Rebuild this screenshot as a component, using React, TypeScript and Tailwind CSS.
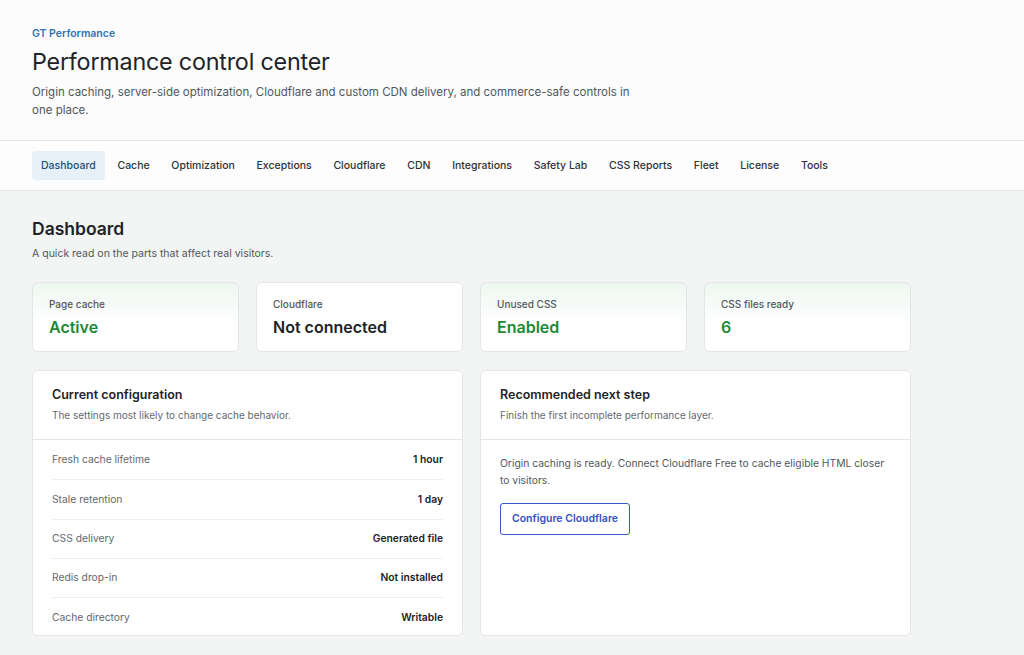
const tabs = [
  'Dashboard',
  'Cache',
  'Optimization',
  'Exceptions',
  'Cloudflare',
  'CDN',
  'Integrations',
  'Safety Lab',
  'CSS Reports',
  'Fleet',
  'License',
  'Tools',
];

const stats = [
  { label: 'Page cache', value: 'Active', ok: true },
  { label: 'Cloudflare', value: 'Not connected', ok: false },
  { label: 'Unused CSS', value: 'Enabled', ok: true },
  { label: 'CSS files ready', value: '6', ok: true },
];

const config = [
  { label: 'Fresh cache lifetime', value: '1 hour' },
  { label: 'Stale retention', value: '1 day' },
  { label: 'CSS delivery', value: 'Generated file' },
  { label: 'Redis drop-in', value: 'Not installed' },
  { label: 'Cache directory', value: 'Writable' },
];

const StatCard = ({ label, value, ok }: { label: string; value: string; ok: boolean }) => (
  <div
    className={
      ok
        ? 'h-[70px] rounded-[6px] border border-[#e3e6e8] bg-gradient-to-b from-[#eef7f0] to-white to-60% px-[16px] pt-[14px]'
        : 'h-[70px] rounded-[6px] border border-[#e3e6e8] bg-white px-[16px] pt-[14px]'
    }
  >
    <p className="text-[10px] leading-[14px] font-medium text-[#50575e]">{label}</p>
    <p
      className={
        ok
          ? 'mt-[5px] text-[16px] leading-[22px] font-semibold text-[#1d8a33]'
          : 'mt-[5px] text-[16px] leading-[22px] font-semibold text-[#1d2327]'
      }
    >
      {value}
    </p>
  </div>
);

const PanelHeader = ({ title, sub }: { title: string; sub: string }) => (
  <div className="border-b border-[#e3e6e8] px-[19px] pt-[15px] pb-[17px]">
    <h3 className="text-[12.5px] leading-[18px] font-semibold text-[#1d2327]">{title}</h3>
    <p className="mt-[4px] text-[10px] leading-[14px] text-[#646970]">{sub}</p>
  </div>
);

export default function App() {
  return (
    <div className="min-h-[655px] bg-[#f3f4f4] font-['Inter',sans-serif] text-[#1d2327]">
      <header className="border-b border-[#e4e6e8] bg-[#fcfcfc] px-8 pt-[26px] pb-[21px]">
        <p className="text-[10.5px] leading-4 font-semibold text-[#2c74b3]">GT Performance</p>
        <h1 className="mt-[4px] text-[23.3px] leading-[32px] font-normal tracking-[-0.2px] text-[#1d2327]">
          Performance control center
        </h1>
        <p className="mt-[5px] max-w-[610px] text-[11.5px] leading-[18px] text-[#50575e]">
          Origin caching, server-side optimization, Cloudflare and custom CDN delivery, and commerce-safe controls in
          one place.
        </p>
      </header>

      <nav className="flex items-center gap-[3.7px] border-b border-[#e4e6e8] bg-[#fdfdfd] px-8 py-[10px]">
        {tabs.map((t, i) => (
          <span
            key={t}
            className={
              i === 0
                ? 'flex h-[29px] items-center rounded-[4px] bg-[#e6f0f8] px-[9px] text-[10.5px] font-medium text-[#1d4f7a]'
                : 'flex h-[29px] items-center rounded-[4px] px-[9px] text-[10.5px] font-medium text-[#2c3338]'
            }
          >
            {t}
          </span>
        ))}
      </nav>

      <main className="px-8 pt-[25px] pb-[19px]">
        <h2 className="text-[17.5px] leading-[26px] font-semibold text-[#1d2327]">Dashboard</h2>
        <p className="mt-[4px] text-[10.5px] leading-4 text-[#50575e]">
          A quick read on the parts that affect real visitors.
        </p>

        <div className="mt-[20px] grid w-[879px] grid-cols-4 gap-[17px]">
          {stats.map((s) => (
            <StatCard key={s.label} {...s} />
          ))}
        </div>

        <div className="mt-[18px] grid w-[879px] grid-cols-2 gap-[17px]">
          <section className="h-[266px] overflow-hidden rounded-[6px] border border-[#e3e6e8] bg-white">
            <PanelHeader title="Current configuration" sub="The settings most likely to change cache behavior." />
            <div className="px-[19px] pt-[1px]">
              {config.map((r, i) => (
                <div
                  key={r.label}
                  className={
                    i < config.length - 1
                      ? 'flex h-[39.3px] items-center justify-between border-b border-[#eceef0] text-[10.3px]'
                      : 'flex h-[39.3px] items-center justify-between text-[10.3px]'
                  }
                >
                  <span className="text-[#646970]">{r.label}</span>
                  <span className="font-semibold text-[#1d2327]">{r.value}</span>
                </div>
              ))}
            </div>
          </section>

          <section className="h-[266px] rounded-[6px] border border-[#e3e6e8] bg-white">
            <PanelHeader title="Recommended next step" sub="Finish the first incomplete performance layer." />
            <div className="px-[19px] pt-[15px]">
              <p className="max-w-[388px] text-[10.3px] leading-[17px] text-[#50575e]">
                Origin caching is ready. Connect Cloudflare Free to cache eligible HTML closer to visitors.
              </p>
              <button className="mt-[14px] flex h-[32px] w-[130px] items-center justify-center rounded-[3px] border border-[#3858c9] bg-white text-[10.5px] font-semibold text-[#3151c4]">
                Configure Cloudflare
              </button>
            </div>
          </section>
        </div>
      </main>
    </div>
  );
}
